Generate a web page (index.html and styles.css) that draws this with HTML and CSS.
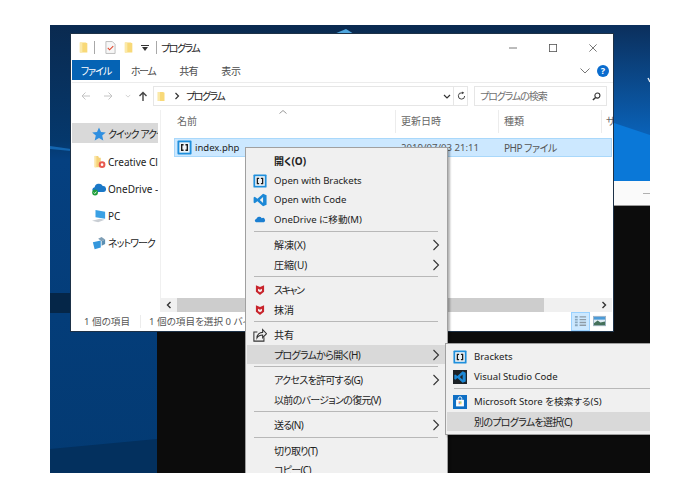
FILE: index.html
```html
<!DOCTYPE html>
<html lang="ja">
<head>
<meta charset="utf-8">
<title>プログラム</title>
<link rel="stylesheet" href="styles.css">
</head>
<body>
<svg class="defs" width="0" height="0" aria-hidden="true">
  <symbol id="folder" viewBox="0 0 12 14">
    <path d="M1 1h7l2 1v11H1z" fill="#f8d978"/>
    <path d="M1 1h3v12H1z" fill="#fbe9a8"/>
  </symbol>
  <symbol id="brackets" viewBox="0 0 16 16">
    <rect x=".5" y=".5" width="15" height="15" rx="1" fill="#1f8fdc"/>
    <rect x="2.500" y="2.500" width="11" height="11" fill="#eef4f8"/>
    <path d="M7 5H5v6h2M9 5h2v6H9" fill="none" stroke="#1b1b1b" stroke-width="1.500"/>
  </symbol>
  <symbol id="code" viewBox="0 0 16 16">
    <path fill-rule="evenodd" d="M11.500 .8 15.500 2.600v10.800l-4 1.800L5 9.300l-3 2.300-1.300-.7V5.100L2 4.400l3 2.300zM11.500 4.700 7.800 8l3.700 3.300z" fill="#1b88d6"/>
  </symbol>
  <symbol id="shield" viewBox="0 0 12 12">
    <path d="M2.500 2l3.500 1.500L9.500 2v5.500L6 10.300 2.500 7.500z" fill="#c8242c"/>
    <path d="M4.300 5l1.700.8L7.700 5v1.800L6 7.900 4.300 6.800z" fill="#f6e9e9"/>
  </symbol>
  <symbol id="chevron" viewBox="0 0 8 12">
    <path d="M1.500 1l5 5-5 5" fill="none" stroke="#333" stroke-width="1.100"/>
  </symbol>
</svg>

<main class="desktop">
  <svg class="wallpaper" viewBox="0 0 600 448" preserveAspectRatio="none" aria-hidden="true">
    <defs>
      <linearGradient id="sky" x1="0" y1="0" x2="0" y2="1">
        <stop offset="0" stop-color="#0a2a50"/>
        <stop offset=".26" stop-color="#05386c"/>
        <stop offset=".3" stop-color="#054080"/>
        <stop offset="1" stop-color="#033a72"/>
      </linearGradient>
      <linearGradient id="right" x1="0" y1="0" x2="0" y2="1">
        <stop offset="0" stop-color="#0b2f5c"/>
        <stop offset="1" stop-color="#0a62b8"/>
      </linearGradient>
    </defs>
    <rect width="600" height="448" fill="url(#sky)"/>
    <rect x="540" width="60" height="110" fill="url(#right)"/>
    <path d="M540 90 600 110V157H540z" fill="#0a78d8"/>
    <path d="M0 121 21 124V126L0 124z" fill="#1466b0"/>
    <path d="M0 268H107V288H0z" fill="#052648"/>
    <path d="M0 424 107 414V448H0z" fill="#03305e"/>
    <path d="M284 9 296 4 304 9z" fill="#4fa6de"/>
    <path d="M598 53 600 57" stroke="#e8eef4" stroke-width="1.400"/>
  </svg>

  <section class="back-window">
    <div class="back-title"><span class="back-min"></span></div>
    <div class="back-body"></div>
  </section>

  <section class="window">
    <header class="titlebar">
      <svg class="ico-folder"><use href="#folder"/></svg>
      <span class="qa-sep"></span>
      <svg class="ico-props" viewBox="0 0 12 14"><path d="M1 .5h7l3 3v10H1z" fill="#f7f7f7" stroke="#b9b9b9"/><path d="M3 7.500l2 2 4-4" fill="none" stroke="#e0462c" stroke-width="1.200"/></svg>
      <svg class="ico-folder ico-folder-2"><use href="#folder"/></svg>
      <svg class="ico-drop" viewBox="0 0 8 6"><path d="M0 0h8v1H0zM1 2h6L4 6z" fill="#333"/></svg>
      <span class="qa-sep qa-sep-2"></span>
      <span class="title-text">プログラム</span>
      <div class="controls">
        <svg viewBox="0 0 10 10"><path d="M0 5h10" stroke="#555"/></svg>
        <svg viewBox="0 0 10 10"><rect x=".5" y=".5" width="9" height="9" fill="none" stroke="#555"/></svg>
        <svg viewBox="0 0 10 10"><path d="M.5.5l9 9M9.500.5l-9 9" stroke="#555"/></svg>
      </div>
    </header>

    <nav class="ribbon">
      <span class="tab tab-file">ファイル</span>
      <span class="tab tab-home">ホーム</span>
      <span class="tab tab-share">共有</span>
      <span class="tab tab-view">表示</span>
      <svg class="ribbon-fold" viewBox="0 0 10 6"><path d="M.5.5 5 5 9.500.5" fill="none" stroke="#777"/></svg>
      <span class="help">?</span>
    </nav>

    <div class="addressbar">
      <div class="nav-buttons">
        <svg viewBox="0 0 10 10"><path d="M9 5H1M4.500 1.500 1 5l3.500 3.500" fill="none" stroke="#c4c4c4"/></svg>
        <svg viewBox="0 0 10 10"><path d="M1 5h8M5.500 1.500 9 5 5.500 8.500" fill="none" stroke="#c4c4c4"/></svg>
        <svg class="nav-small" viewBox="0 0 8 5"><path d="M1 1l3 3 3-3" fill="none" stroke="#c4c4c4"/></svg>
        <svg viewBox="0 0 10 10"><path d="M5 10V1.500M1.500 5 5 1.500 8.500 5" fill="none" stroke="#444" stroke-width="1.400"/></svg>
      </div>
      <div class="path-box">
        <svg class="ico-folder"><use href="#folder"/></svg>
        <svg class="crumb" viewBox="0 0 6 8"><path d="M1.500 1l3 3-3 3" fill="none" stroke="#333" stroke-width="1.200"/></svg>
        <span class="path-text">プログラム</span>
        <svg class="path-drop" viewBox="0 0 8 5"><path d="M1 1l3 3 3-3" fill="none" stroke="#333" stroke-width="1.200"/></svg>
        <span class="refresh-sep"></span>
        <svg class="refresh" viewBox="0 0 10 10"><path d="M8.500 5A3.500 3.500 0 1 1 5.500 1.500H7" fill="none" stroke="#444" stroke-width="1.100"/><path d="M5.500 0 8 1.500 5.500 3z" fill="#444"/></svg>
      </div>
      <div class="search-box">
        <span>プログラムの検索</span>
        <svg viewBox="0 0 10 10"><circle cx="6" cy="4" r="2.800" fill="none" stroke="#333" stroke-width="1.200"/><path d="M4 6 1 9" stroke="#333" stroke-width="1.600"/></svg>
      </div>
    </div>

    <div class="explorer">
      <aside class="sidebar">
        <div class="side-item is-current">
          <svg class="side-ico" viewBox="0 0 14 14"><path d="M7 .5 9 5l4.800.4-3.600 3.200 1.100 4.800L7 11 2.700 13.400l1.100-4.800L.2 5.400 5 5z" fill="#2f8fe0"/></svg>
          <span class="kana">クイック アクセス</span>
        </div>
        <div class="side-item">
          <svg class="side-ico" viewBox="0 0 16 16"><path d="M3 1h4l1 2h2v11H3z" fill="#f5d27a"/><path d="M3 1h2v13H3z" fill="#fbe7a6"/><circle cx="11.500" cy="11" r="3.800" fill="#e8594f"/><circle cx="11.500" cy="11" r="1.500" fill="#fff"/></svg>
          <span>Creative Cloud Files</span>
        </div>
        <div class="side-item">
          <svg class="side-ico" viewBox="0 0 16 16"><path d="M2.500 11.500a2.800 2.800 0 0 1 .5-5.500 5 5 0 0 1 9.300-1.300A3.400 3.400 0 0 1 13 11.500z" fill="#1a78c8"/><circle cx="3.500" cy="12" r="3.300" fill="#1e9e3a"/><path d="M2 12l1.200 1.200 1.800-2.200" fill="none" stroke="#fff"/></svg>
          <span>OneDrive - Personal</span>
        </div>
        <div class="side-item">
          <svg class="side-ico" viewBox="0 0 16 16"><path d="M4 1l11 2v8L4 9.500z" fill="#3aa0e4"/><path d="M0 13.500l9-2.500 5.500 1.200L7 15z" fill="#c9ced4"/></svg>
          <span>PC</span>
        </div>
        <div class="side-item">
          <svg class="side-ico" viewBox="0 0 16 16"><path d="M1 7l9-2v8l-7 2z" fill="#3597dc"/><path d="M7 3l4-2 4 3-4 2z" fill="#7f9fb6"/><path d="M11 6l4-2v5l-4 2z" fill="#5c8fb2"/></svg>
          <span class="kana">ネットワーク</span>
        </div>
      </aside>

      <div class="pane">
        <div class="columns">
          <span class="col col-name">名前</span>
          <span class="col">更新日時</span>
          <span class="col">種類</span>
          <span class="col col-size">サイズ</span>
          <svg class="sort-caret" viewBox="0 0 8 4"><path d="M.5 3.500 4 .5l3.500 3" fill="none" stroke="#999"/></svg>
        </div>
        <div class="file-row">
          <span class="file-name"><svg class="file-ico"><use href="#brackets"/></svg>index.php</span>
          <span class="file-cell">2019/07/03 21:11</span>
          <span class="file-cell file-type">PHP ファイル</span>
        </div>
        <div class="pane-fill"></div>
        <div class="hscroll">
          <svg class="scroll-arrow" viewBox="0 0 6 8"><path d="M4.500 1l-3 3 3 3" fill="none" stroke="#333" stroke-width="1.400"/></svg>
          <div class="scroll-track"><div class="scroll-thumb"></div></div>
          <svg class="scroll-arrow" viewBox="0 0 6 8"><path d="M1.500 1l3 3-3 3" fill="none" stroke="#333" stroke-width="1.400"/></svg>
        </div>
      </div>
    </div>

    <footer class="statusbar">
      <span class="status-count">1 個の項目</span>
      <span class="status-sep"></span>
      <span class="status-sel">1 個の項目を選択 0 バイト</span>
      <div class="view-buttons">
        <span class="view-btn is-on">
          <svg viewBox="0 0 14 14"><path d="M1 2h3M1 5h3M1 8h3M1 11h3" stroke="#8aa8bf" stroke-width="2"/><path d="M6 2h7M6 5h7M6 8h7M6 11h7" stroke="#8f9ba5" stroke-width="1.500"/></svg>
        </span>
        <span class="view-btn">
          <svg viewBox="0 0 14 12"><rect x=".5" y=".5" width="13" height="10" fill="#dfeaf2" stroke="#9fb3c4"/><path d="M1 8l4-3 3 2 5-1v4H1z" fill="#44705a"/><path d="M1 1h12v3H1z" fill="#4c9bd8"/></svg>
        </span>
      </div>
    </footer>
  </section>

  <section class="menu">
    <div class="menu-item strong"><span class="menu-ico"></span>開く(O)</div>
    <div class="menu-item latin"><svg class="menu-ico"><use href="#brackets"/></svg>Open with Brackets</div>
    <div class="menu-item latin"><svg class="menu-ico"><use href="#code"/></svg>Open with Code</div>
    <div class="menu-item latin">
      <svg class="menu-ico" viewBox="0 0 16 16"><path d="M3.500 10.500a1.900 1.900 0 0 1 .2-3.700A3.500 3.500 0 0 1 10 6a2.300 2.300 0 0 1 2.500 4.500z" fill="#1b7fd1"/></svg>
      OneDrive に移動(M)
    </div>
    <div class="menu-sep"></div>
    <div class="menu-item"><span class="menu-ico"></span>解凍(X)<svg class="menu-arrow"><use href="#chevron"/></svg></div>
    <div class="menu-item"><span class="menu-ico"></span>圧縮(U)<svg class="menu-arrow"><use href="#chevron"/></svg></div>
    <div class="menu-sep"></div>
    <div class="menu-item katakana"><svg class="menu-ico"><use href="#shield"/></svg>スキャン</div>
    <div class="menu-item"><svg class="menu-ico"><use href="#shield"/></svg>抹消</div>
    <div class="menu-sep"></div>
    <div class="menu-item">
      <svg class="menu-ico" viewBox="0 0 16 16"><path d="M5 4.500H1v10.500h11.500V10.500" fill="none" stroke="#333" stroke-width="1.200"/><path d="M4.500 11.500c0-4 3-6.500 6.500-6.500V1.800L15.500 6.500 11 11V8c-3 0-5 1-6.500 3.500z" fill="none" stroke="#333" stroke-width="1.200"/></svg>
      共有
    </div>
    <div class="menu-item kana is-hover"><span class="menu-ico"></span>プログラムから開く(H)<svg class="menu-arrow"><use href="#chevron"/></svg></div>
    <div class="menu-sep"></div>
    <div class="menu-item kana"><span class="menu-ico"></span>アクセスを許可する(G)<svg class="menu-arrow"><use href="#chevron"/></svg></div>
    <div class="menu-item kana"><span class="menu-ico"></span>以前のバージョンの復元(V)</div>
    <div class="menu-sep"></div>
    <div class="menu-item kana"><span class="menu-ico"></span>送る(N)<svg class="menu-arrow"><use href="#chevron"/></svg></div>
    <div class="menu-sep"></div>
    <div class="menu-item kana"><span class="menu-ico"></span>切り取り(T)</div>
    <div class="menu-item kana"><span class="menu-ico"></span>コピー(C)</div>
  </section>

  <section class="menu submenu">
    <div class="menu-item latin"><svg class="menu-ico"><use href="#brackets"/></svg>Brackets</div>
    <div class="menu-item latin">
      <svg class="menu-ico" viewBox="0 0 16 16"><rect width="16" height="16" fill="#1d2226"/><path fill-rule="evenodd" d="M11 1.500 14.500 3v10L11 14.500 5 9.200 2.600 11 1.500 10.400V5.600L2.600 5 5 6.800zM11 5 7.800 8 11 11z" fill="#1b88d6"/></svg>
      Visual Studio Code
    </div>
    <div class="menu-sep"></div>
    <div class="menu-item latin">
      <svg class="menu-ico" viewBox="0 0 16 16"><rect width="16" height="16" fill="#0f6fc4"/><path d="M3.500 5.500h9V13h-9z" fill="#fff"/><path d="M6 5.500V4a2 2 0 0 1 4 0v1.500" fill="none" stroke="#fff"/><path d="M6.500 7.500h1.300v1.300H6.500z" fill="#e8512c"/><path d="M8.300 7.500h1.300v1.300H8.300z" fill="#6aae2e"/><path d="M6.500 9.300h1.300v1.300H6.500z" fill="#1e8fe0"/><path d="M8.300 9.300h1.300v1.300H8.300z" fill="#f4b400"/></svg>
      Microsoft Store を検索する(S)
    </div>
    <div class="menu-item kana is-hover"><span class="menu-ico"></span>別のプログラムを選択(C)</div>
  </section>
</main>
</body>
</html>
```

FILE: styles.css
```css
* { box-sizing: border-box; }

html, body { margin: 0; padding: 0; background: #fff; }

body {
  height: 498px;
  overflow: hidden;
  font: 10px/1.2 "Noto Sans", "Noto Sans CJK JP", sans-serif;
  font-feature-settings: "palt";
  color: #222;
}

.defs { position: absolute; }

svg { display: block; flex: none; }

/* Desktop canvas: the windows sit on it at free positions */
.desktop {
  position: relative;
  width: 600px;
  height: 448px;
  margin: 25px 0 0 50px;
  overflow: hidden;
  background: #033a72;
}

.wallpaper { position: absolute; inset: 0; width: 100%; height: 100%; }

.back-window {
  position: absolute;
  left: 107px;
  top: 156px;
  width: 500px;
  bottom: 0;
  display: flex;
  flex-direction: column;
}

.back-title {
  height: 25px;
  background: #fafafa;
  border-bottom: 1px solid #9a9a9a;
  display: flex;
  align-items: center;
  justify-content: flex-end;
  padding-right: 7px;
}

.back-min { width: 7px; height: 1px; background: #b0b0b0; }

.back-body { flex: 1; background: #0c0c0c; }

/* Explorer window */
.window {
  position: absolute;
  left: 21px;
  top: 9px;
  width: 542px;
  height: 297px;
  background: #fff;
  border-left: 1px solid #fff;
  border-top: 1px solid #fff;
  display: flex;
  flex-direction: column;
  box-shadow: 0 0 0 1px #1d3147;
}

.titlebar {
  height: 25px;
  display: flex;
  align-items: center;
  padding-left: 7px;
  flex: none;
}

.ico-folder { width: 10px; height: 13px; }

.qa-sep { width: 1px; height: 13px; background: #a8a8a8; margin: 0 10px 0 5px; }

.ico-props { width: 11px; height: 13px; margin-right: 8px; }

.ico-folder-2 { margin-right: 7px; }

.ico-drop { width: 8px; height: 6px; }

.qa-sep-2 { margin: 0 4px 0 7px; }

.title-text { letter-spacing: -1.500px; }

.controls { margin-left: auto; display: flex; align-items: center; gap: 32px; padding-right: 16px; }

.controls svg { width: 8px; height: 8px; }

.ribbon {
  height: 23px;
  flex: none;
  display: flex;
  align-items: flex-start;
  border-bottom: 1px solid #ececec;
  padding-right: 4px;
}

.tab { height: 20px; line-height: 22px; color: #4a4a4a; }

.tab-file {
  width: 48px;
  background: #0563b4;
  color: #fff;
  text-align: center;
  letter-spacing: -1px;
}

.tab-home { margin-left: 11px; letter-spacing: -1.500px; }
.tab-share { margin-left: 24px; letter-spacing: -.5px; }
.tab-view { margin-left: 23px; }

.ribbon-fold { width: 10px; height: 6px; margin: 8px 0 0 auto; }

.help {
  width: 12px;
  height: 12px;
  margin: 5px 0 0 7px;
  border-radius: 50%;
  background: #0a6cce;
  color: #fff;
  font: 700 9px/12px "Noto Sans", sans-serif;
  text-align: center;
}

.addressbar {
  height: 27px;
  flex: none;
  display: flex;
  align-items: flex-start;
  padding-top: 3px;
}

.nav-buttons {
  width: 81px;
  height: 20px;
  flex: none;
  display: flex;
  align-items: center;
  padding-left: 9px;
}

.nav-buttons svg { width: 10px; height: 10px; margin-right: 12px; }

.nav-buttons .nav-small { width: 6px; height: 4px; margin-right: 7px; }

.nav-buttons svg:last-child { margin-right: 0; }

.path-box {
  width: 315px;
  height: 20px;
  flex: none;
  display: flex;
  align-items: center;
  border: 1px solid #e6e6e6;
  padding-left: 3px;
}

.path-box .ico-folder { width: 9px; }

.crumb { width: 6px; height: 8px; margin: 0 6px 0 8px; }

.path-text { letter-spacing: -1.500px; }

.path-drop { width: 8px; height: 5px; margin-left: auto; }

.refresh-sep { width: 1px; height: 18px; background: #e6e6e6; margin: 0 3px 0 2px; }

.refresh { width: 9px; height: 10px; margin-right: 1px; }

.search-box {
  width: 133px;
  height: 20px;
  margin-left: 6px;
  flex: none;
  display: flex;
  align-items: center;
  justify-content: space-between;
  border: 1px solid #e6e6e6;
  padding: 0 5px;
  color: #707070;
  letter-spacing: -1.100px;
}

.search-box svg { width: 9px; height: 9px; }

.explorer { flex: 1; display: flex; min-height: 0; }

.sidebar {
  width: 89px;
  flex: none;
  padding: 13px 2px 0 0;
  border-right: 1px solid #f0f0f0;
  display: flex;
  flex-direction: column;
  gap: 7px;
}

.side-item {
  height: 20px;
  display: flex;
  align-items: center;
  white-space: nowrap;
  overflow: hidden;
  color: #222;
  padding: 1px 0 0 20px;
}

.side-item .kana { letter-spacing: -1px; }

.side-item.is-current { background: #d9d9d9; margin-bottom: 1px; }

.side-ico { width: 14px; height: 14px; margin-right: 2px; }

.pane {
  flex: 1;
  min-width: 0;
  display: flex;
  flex-direction: column;
  padding-right: 1px;
}

.columns {
  height: 23px;
  flex: none;
  display: grid;
  grid-template-columns: 234px 103px 103px 1fr;
  position: relative;
  overflow: hidden;
  margin-right: -1px;
}

.col {
  color: #666;
  line-height: 23px;
  padding-left: 5px;
  border-left: 1px solid #ececec;
  white-space: nowrap;
  overflow: hidden;
}

.col-name { border-left: 0; padding-left: 16px; }

.col-size { padding-left: 4px; }

.sort-caret { position: absolute; left: 118px; top: 0; width: 8px; height: 4px; }

.file-row {
  height: 19px;
  margin: 5px 0 0 13px;
  flex: none;
  display: grid;
  grid-template-columns: 220px 103px 103px;
  align-items: center;
  background: #cce8ff;
  border: 1px solid #a9d8fb;
  white-space: nowrap;
  overflow: hidden;
}

.file-name { display: flex; align-items: center; gap: 3px; padding-left: 2px; color: #222; font-size: 9.500px; }

.file-ico { width: 15px; height: 15px; }

.file-cell { padding-left: 6px; color: #555; font-size: 9.600px; }

.file-type { font-size: 10px; letter-spacing: -.5px; }

.pane-fill { flex: 1; }

.hscroll {
  height: 14px;
  flex: none;
  display: flex;
  align-items: center;
  background: #f0f0f0;
  padding: 0 5px;
}

.scroll-arrow { width: 6px; height: 8px; }

.scroll-track { flex: 1; height: 14px; margin: 0 5px; }

.scroll-thumb { width: 367px; height: 14px; background: #cdcdcd; }

.statusbar {
  height: 19px;
  flex: none;
  display: flex;
  align-items: center;
  color: #555;
  white-space: nowrap;
  padding-left: 12px;
  font-size: 9.600px;
}

.status-count { width: 56px; }

.status-sep { width: 1px; height: 13px; background: #ececec; margin-right: 8px; }

.status-sel { width: 200px; overflow: hidden; }

.view-buttons { margin-left: auto; display: flex; align-items: center; margin-right: 7px; }

.view-btn {
  width: 14px;
  height: 19px;
  display: flex;
  align-items: center;
  justify-content: center;
}

.view-btn.is-on {
  width: 19px;
  background: #cce8ff;
  border: 1px solid #99d1ff;
  margin-right: 2px;
}

.view-btn svg { width: 13px; height: 13px; }

/* Context menus */
.menu {
  position: absolute;
  left: 195px;
  top: 122px;
  width: 203px;
  padding: 3.400px 2px 3px 1px;
  background: #f0f0f0;
  border: 1px solid #a0a0a0;
  box-shadow: 2px 2px 2px rgba(0, 0, 0, .3);
  color: #222;
}

.submenu { left: 395px; top: 318px; width: 260px; }

.menu-item {
  position: relative;
  height: 19.500px;
  display: flex;
  align-items: center;
  white-space: nowrap;
}

.menu-item.latin { font-size: 9.600px; }

.menu-item.kana { letter-spacing: -.7px; }

.menu-item.katakana { letter-spacing: -1.500px; }

.menu-item.strong { font-weight: 700; }

.menu-item.is-hover { background: #d9d9d9; }

.menu-ico { width: 14px; height: 14px; margin: 0 7px 0 6px; }

.menu-arrow { position: absolute; right: 5px; top: 4px; width: 8px; height: 12px; }

.menu-sep { height: 6px; position: relative; }

.menu-sep::after {
  content: "";
  position: absolute;
  left: 7px;
  right: 7px;
  top: 2px;
  height: 1px;
  background: #b8b8b8;
}

.submenu .menu-sep::after { right: 0; }
```
